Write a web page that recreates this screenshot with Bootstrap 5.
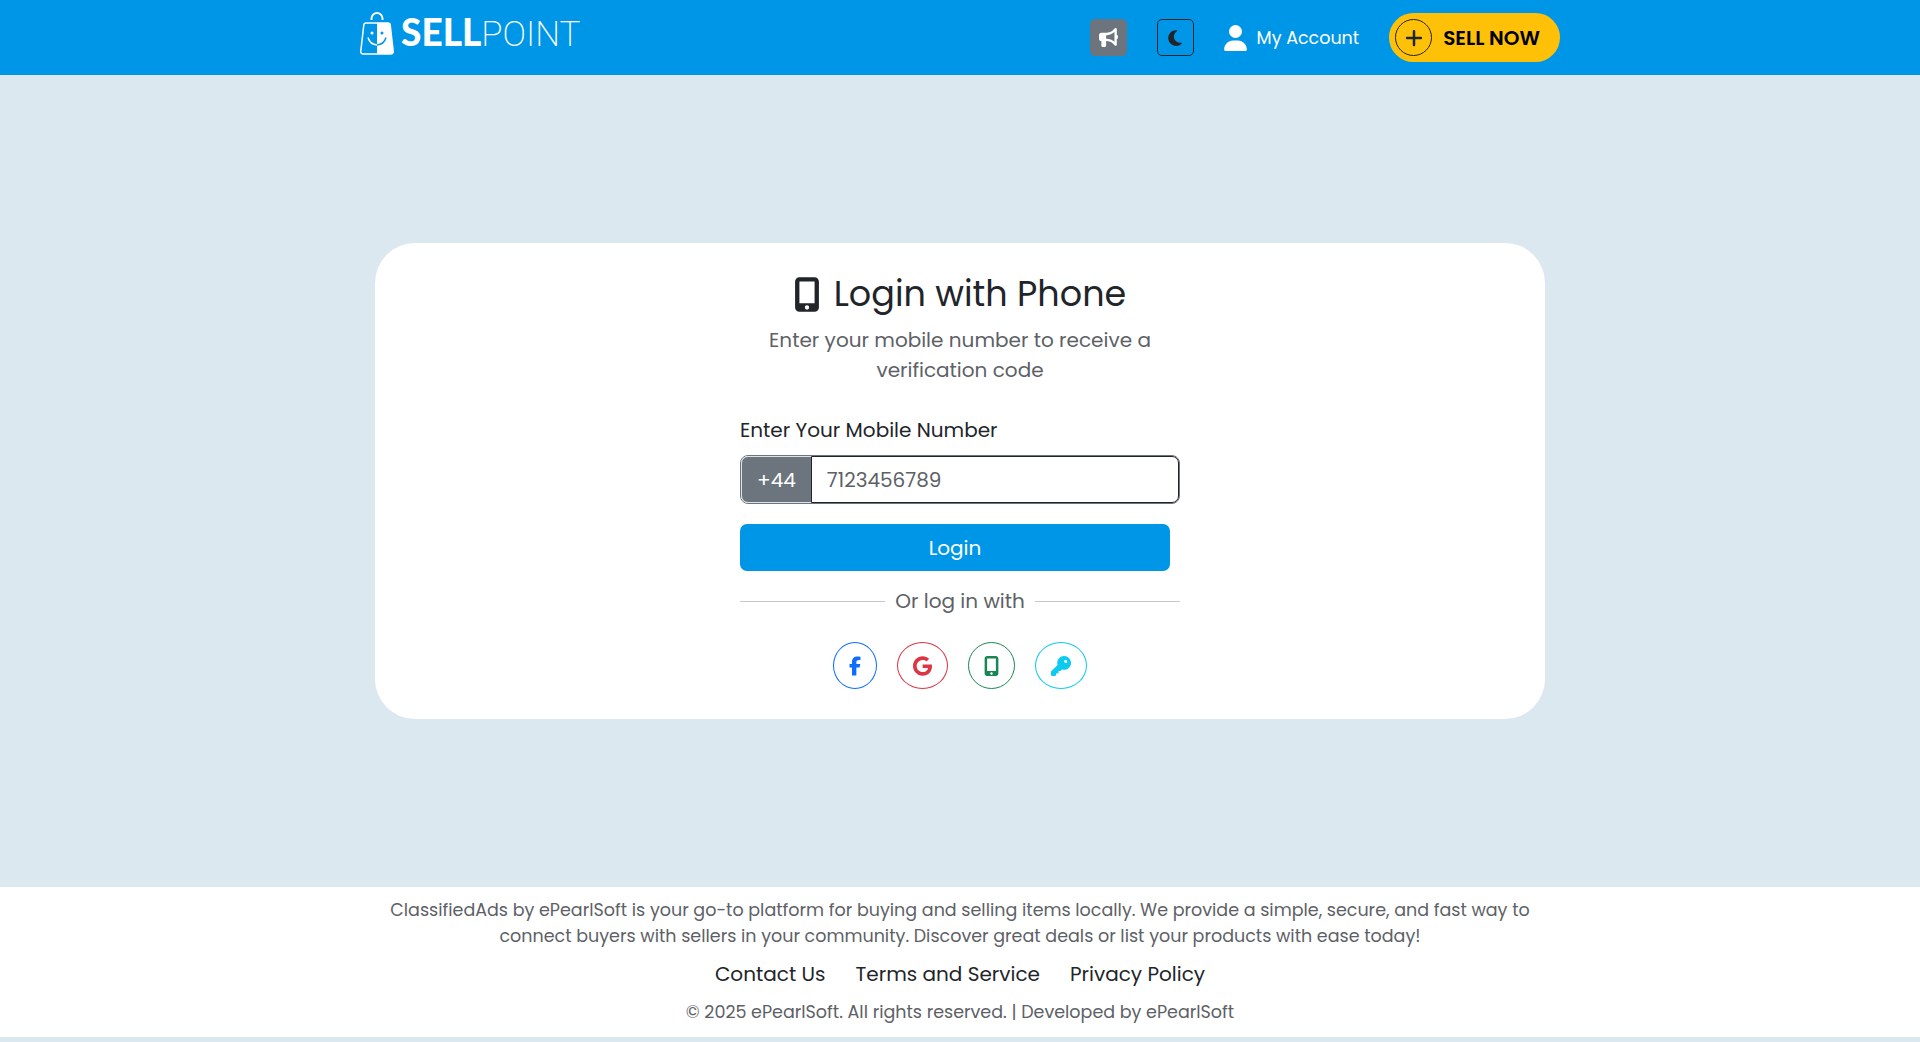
<!DOCTYPE html>
<html lang="en">
<head>
<meta charset="utf-8">
<meta name="viewport" content="width=device-width, initial-scale=1">
<title>SellPoint - Login with Phone</title>
<link href="https://cdn.jsdelivr.net/npm/bootstrap@5.3.0/dist/css/bootstrap.min.css" rel="stylesheet">
<style>
  :root { --brand: #0096e8; --page: #dce8f0; --soft: #5d6166; }
  body { font-family: Poppins, Inter, "Open Sans", sans-serif; font-size: 20px; line-height: 30px; background: var(--page); color: #212529; }
  svg { fill: currentColor; display: block; flex: none; }
  .shell { max-width: 1200px; }
  .topbar { background: var(--brand); height: 75px; }
  .logo-link { gap: 7px; }
  .logo-word { font-family: Lato, sans-serif; font-size: 37px; line-height: 44px; }
  .logo-word b { font-weight: 900; }
  .logo-word span { font-family: Roboto, sans-serif; font-weight: 200; font-size: 35px; }
  .top-actions { gap: 30px; }
  .square-btn { width: 37px; height: 37px; padding: 0; border-radius: 5px; }
  .account-link { gap: 10px; }
  .sell-link { height: 49px; padding: 0 20px 0 6px; gap: 11px; border-radius: 25px; background: #ffc107; font-weight: 600; }
  .plus-ring { width: 37px; height: 37px; border: 1px solid #212529; }
  .login-card { max-width: 1170px; border-radius: 40px; padding: 30px 15px; }
  .login-col { max-width: 440px; }
  .login-col h1 { font-size: 35px; line-height: 42px; font-weight: 400; margin-bottom: 10px; gap: 14px; }
  .soft-text { color: var(--soft); }
  .intro { margin-bottom: 30px; }
  .form-label { margin-bottom: 10px; }
  .phone-group { border: 1px solid #6c757d; border-radius: 8px; margin-bottom: 20px; }
  .phone-group .input-group-text { background: #6c757d; border-color: #dee2e6; color: #fff; padding: 0 15px; font-size: 20px; border-radius: 7px; }
  .phone-group .form-control { border-color: #212529; height: 47px; padding: 0 15px; font-size: 20px; border-radius: 7px; }
  .phone-group .form-control::placeholder { color: var(--soft); }
  .login-btn { width: calc(100% - 10px); height: 47px; padding: 0; font-size: 20px; background: var(--brand); color: #fff; border-radius: 7px; }
  .login-btn:hover { background: #0081c8; color: #fff; }
  .divider { margin: 15px 0 26px; gap: 10px; }
  .divider hr { margin: 0; color: #212529; }
  .social-row { gap: 20px; }
  .social-row .btn { height: 47px; padding: 0 15px; border-radius: 50%; }
  .site-footer { background: #fff; margin-bottom: 5px; padding: 10px 0 12px; }
  .site-footer p { line-height: 26px; color: var(--soft); }
  .footer-links { gap: 30px; margin: 10px 0; }
</style>
</head>
<body class="d-flex flex-column min-vh-100">
<header class="topbar d-flex align-items-center">
  <div class="shell container-fluid px-0 d-flex align-items-center justify-content-between">
    <a href="#" class="logo-link d-flex align-items-center text-white text-decoration-none pb-2" aria-label="SellPoint">
      <svg width="34" height="43" viewBox="0 0 34 43" aria-hidden="true">
        <path d="M11.500 8V6.500a5.500 5.500 0 0 1 11 0V8" fill="none" stroke="#fff" stroke-width="2"/>
        <path d="M6 11h22q2 0 2.200 2l3 26q.300 3-2.700 3H3.500q-3 0-2.700-3l3-26Q4 11 6 11z" fill="none" stroke="#fff" stroke-width="1.500"/>
        <path d="M17 11h11q2 0 2.200 2l3 26q.300 3-2.700 3H17z"/>
        <circle cx="12" cy="21" r="1.500"/>
        <circle cx="22" cy="21" r="1.500" fill="#0096e8"/>
        <path d="M8 25.500q2 7 9 7.500" fill="none" stroke="#fff" stroke-width="1.500"/>
        <path d="M17 33q7-.500 9-7.500" fill="none" stroke="#0096e8" stroke-width="1.500"/>
      </svg>
      <div class="logo-word"><b>SELL</b><span>POINT</span></div>
    </a>
    <nav class="top-actions d-flex align-items-center">
      <button type="button" class="btn btn-secondary square-btn d-flex align-items-center justify-content-center" aria-label="Announcements">
        <svg width="19" height="19" viewBox="0 0 512 512"><path d="M480 32c0-12.900-7.800-24.600-19.800-29.600s-25.700-2.200-34.900 6.900L381.700 53c-48 48-113.100 75-181 75H64c-35.300 0-64 28.700-64 64v96c0 35.300 28.700 64 64 64v128c0 17.700 14.300 32 32 32h64c17.700 0 32-14.300 32-32V352h8.700c67.900 0 133 27 181 75l43.600 43.600c9.200 9.200 22.900 11.900 34.900 6.900s19.800-16.600 19.800-29.600V300.400c18.600-8.800 32-32.500 32-60.400s-13.400-51.600-32-60.400zm-64 76.700v262.600C357.200 317.800 280.500 288 200.700 288H192v-96h8.700c79.800 0 156.500-29.800 215.300-83.300z"/></svg>
      </button>
      <button type="button" class="btn btn-outline-dark square-btn d-flex align-items-center justify-content-center" aria-label="Dark mode">
        <svg width="14" height="18" viewBox="0 0 384 512"><path d="M223.500 32C100 32 0 132.300 0 256s100 224 223.500 224c60.600 0 115.500-24.200 155.800-63.400 5-4.900 6.300-12.500 3.100-18.700s-10.100-9.700-17-8.500c-9.800 1.700-19.800 2.600-30.100 2.600-96.900 0-175.500-78.800-175.500-176 0-65.800 36-123.100 89.300-153.300 6.100-3.500 9.200-10.500 7.700-17.300s-7.300-11.900-14.300-12.500c-6.300-.500-12.600-.900-19-.900z"/></svg>
      </button>
      <a href="#" class="account-link small d-flex align-items-center text-white text-decoration-none">
        <svg width="23" height="26" viewBox="0 0 448 512"><path d="M224 256a128 128 0 1 0 0-256 128 128 0 1 0 0 256zm-45.700 48C79.800 304 0 383.800 0 482.300 0 498.700 13.300 512 29.700 512h388.600c16.400 0 29.700-13.300 29.700-29.700 0-98.500-79.800-178.300-178.300-178.300z"/></svg>
        My Account
      </a>
      <a href="#" class="sell-link d-flex align-items-center text-black text-decoration-none">
        <span class="plus-ring rounded-circle d-flex align-items-center justify-content-center">
          <svg width="18" height="20" viewBox="0 0 448 512"><path d="M256 80c0-17.700-14.300-32-32-32s-32 14.300-32 32v144H48c-17.700 0-32 14.300-32 32s14.300 32 32 32h144v144c0 17.700 14.300 32 32 32s32-14.300 32-32V288h144c17.700 0 32-14.300 32-32s-14.300-32-32-32H256z" fill="#212529"/></svg>
        </span>
        SELL NOW
      </a>
    </nav>
  </div>
</header>

<main class="flex-fill d-flex align-items-center justify-content-center">
  <section class="login-card bg-white w-100">
    <div class="login-col mx-auto">
      <h1 class="d-flex align-items-center justify-content-center">
        <svg width="26" height="35" viewBox="0 0 384 512"><path d="M16 64C16 28.700 44.700 0 80 0h224c35.300 0 64 28.700 64 64v384c0 35.300-28.700 64-64 64H80c-35.300 0-64-28.700-64-64zm208 384a32 32 0 1 0-64 0 32 32 0 1 0 64 0zm80-384H80v320h224z"/></svg>
        Login with Phone
      </h1>
      <p class="intro soft-text text-center px-4">Enter your mobile number to receive a verification code</p>
      <form>
        <label for="mobile" class="form-label d-block">Enter Your Mobile Number</label>
        <div class="input-group phone-group">
          <span class="input-group-text">+44</span>
          <input type="tel" id="mobile" class="form-control" placeholder="7123456789">
        </div>
        <button type="submit" class="btn login-btn d-block">Login</button>
      </form>
      <div class="divider d-flex align-items-center">
        <hr class="flex-fill"><span class="soft-text">Or log in with</span><hr class="flex-fill">
      </div>
      <div class="social-row d-flex justify-content-center">
        <a href="#" class="btn btn-outline-primary d-flex align-items-center" aria-label="Facebook">
          <svg width="12" height="20" viewBox="0 0 320 512"><path d="M80 299.300V512h116V299.300h86.500l18-97.800H196v-34.600c0-51.700 20.300-71.500 72.700-71.500 16.300 0 29.400.400 37 1.200V7.900C291.400 4 256.400 0 236.200 0 129.300 0 80 50.500 80 159.400v42.100H14v97.800z"/></svg>
        </a>
        <a href="#" class="btn btn-outline-danger d-flex align-items-center" aria-label="Google">
          <svg width="19" height="20" viewBox="0 0 488 512"><path d="M488 261.800C488 403.300 391.100 504 248 504 110.800 504 0 393.200 0 256S110.800 8 248 8c66.800 0 123 24.500 166.300 64.900l-67.500 64.900C258.500 52.600 94.300 116.600 94.300 256c0 86.500 69.100 156.600 153.700 156.600 98.200 0 135-70.400 140.800-106.900H248v-85.300h236.100c2.300 12.700 3.900 24.900 3.900 41.400z"/></svg>
        </a>
        <a href="#" class="btn btn-outline-success d-flex align-items-center" aria-label="Phone">
          <svg width="15" height="20" viewBox="0 0 384 512"><path d="M16 64C16 28.700 44.700 0 80 0h224c35.300 0 64 28.700 64 64v384c0 35.300-28.700 64-64 64H80c-35.300 0-64-28.700-64-64zm208 384a32 32 0 1 0-64 0 32 32 0 1 0 64 0zm80-384H80v320h224z"/></svg>
        </a>
        <a href="#" class="btn btn-outline-info d-flex align-items-center" aria-label="Password">
          <svg width="20" height="20" viewBox="0 0 512 512"><path d="M336 352c97.200 0 176-78.800 176-176S433.200 0 336 0 160 78.800 160 176c0 18.700 2.900 36.800 8.300 53.700L7 391c-4.500 4.500-7 10.600-7 17v80c0 13.300 10.700 24 24 24h80c13.300 0 24-10.700 24-24v-40h40c13.300 0 24-10.700 24-24v-40h40c6.400 0 12.500-2.500 17-7l33.300-33.300c16.900 5.400 35 8.300 53.700 8.300zm40-256a40 40 0 1 1 0 80 40 40 0 1 1 0-80z"/></svg>
        </a>
      </div>
    </div>
  </section>
</main>

<footer class="site-footer text-center">
  <div class="shell container-fluid px-3">
    <p class="small mb-0">ClassifiedAds by ePearlSoft is your go-to platform for buying and selling items locally. We provide a simple, secure, and fast way to connect buyers with sellers in your community. Discover great deals or list your products with ease today!</p>
    <nav class="footer-links d-flex flex-wrap justify-content-center">
      <a href="#" class="text-reset text-decoration-none">Contact Us</a>
      <a href="#" class="text-reset text-decoration-none">Terms and Service</a>
      <a href="#" class="text-reset text-decoration-none">Privacy Policy</a>
    </nav>
    <p class="small mb-0">© 2025 ePearlSoft. All rights reserved. | Developed by ePearlSoft</p>
  </div>
</footer>
<script src="https://cdn.jsdelivr.net/npm/bootstrap@5.3.0/dist/js/bootstrap.bundle.min.js"></script>
</body>
</html>
